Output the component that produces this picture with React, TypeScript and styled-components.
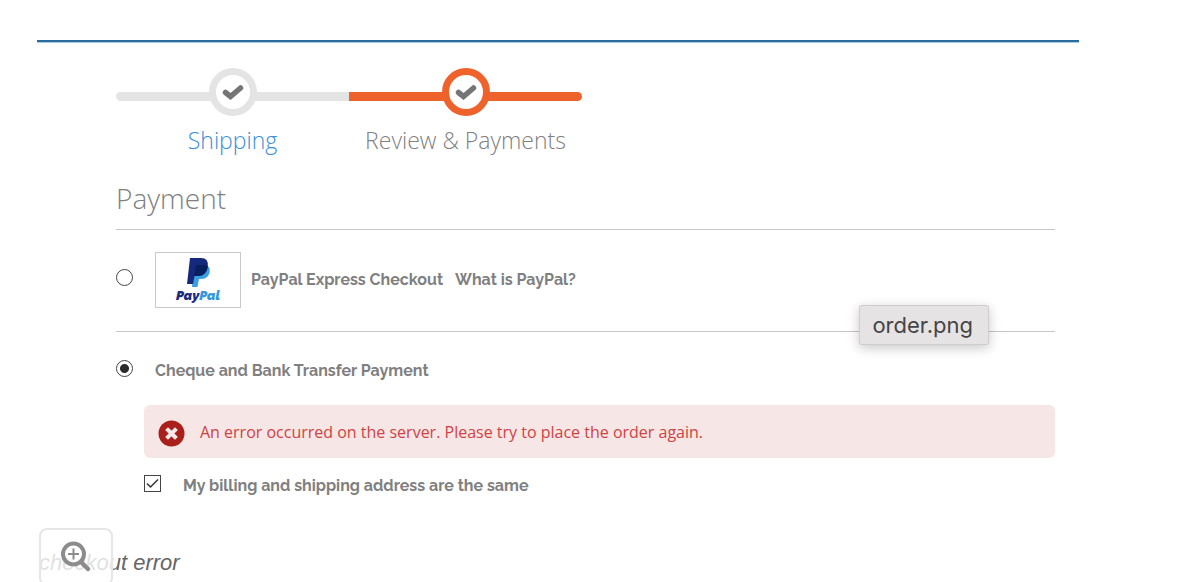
import React from 'react';
import styled, { createGlobalStyle } from 'styled-components';

const GlobalStyle = createGlobalStyle`
  *, *::before, *::after { box-sizing: border-box; }
  body { margin: 0; background: #fff; }
  h2, ol, figure { margin: 0; padding: 0; }
`;

const Figure = styled.figure`
  min-width: 0;
  height: 100vh;
  overflow: hidden;
  padding: 40px 103px 0 37px;
`;

const Screen = styled.div`
  border-top: 2px solid #2b6c9c;
  box-shadow: inset 0 1px 0 #a9cfe2;
  padding: 26px 24px 0 79px;
  font-family: 'Open Sans', 'Noto Sans', sans-serif;
  color: #808080;
`;

const Steps = styled.ol`
  display: flex;
  max-width: 466px;
  list-style: none;
`;

const Step = styled.li<{ $color: string; $last?: boolean }>`
  flex: 1;
  display: grid;
  grid-template-rows: 48px auto;
  justify-items: center;

  &::before {
    content: '';
    grid-area: 1 / 1;
    align-self: end;
    justify-self: stretch;
    height: 9px;
    margin-bottom: 15px;
    background: ${p => p.$color};
    border-radius: ${p => (p.$last ? '0 5px 5px 0' : '5px 0 0 5px')};
  }
`;

const Ring = styled.span<{ $color: string }>`
  grid-area: 1 / 1;
  z-index: 1;
  display: grid;
  place-items: center;
  width: 48px;
  height: 48px;
  border: 7px solid ${p => p.$color};
  border-radius: 50%;
  background: #fff;
`;

const StepLabel = styled.span`
  margin-top: 8px;
  font-size: 23px;
  font-weight: 300;
  line-height: 32px;
  white-space: nowrap;
`;

const StepLink = styled.a`
  color: #3a8fd6;
  text-decoration: none;
`;

const Title = styled.h2`
  margin-top: 24px;
  padding-bottom: 12px;
  border-bottom: 1px solid #c6c6c6;
  font-size: 28px;
  font-weight: 300;
  line-height: 37px;
`;

const Method = styled.div`
  position: relative;
  display: flex;
  align-items: center;
  height: 102px;
  padding-bottom: 1px;
  border-bottom: 1px solid #c6c6c6;
`;

const PlainMethod = styled.div`
  display: flex;
  align-items: center;
  height: 73px;
  padding-top: 4px;
`;

const Radio = styled.input`
  appearance: none;
  flex: none;
  width: 17px;
  height: 17px;
  margin: 0 22px 5px 0;
  border: 1px solid #444;
  border-radius: 50%;
  background: #fff;

  &:checked {
    background: radial-gradient(circle, #2b2b2b 4px, #fff 5px);
  }
`;

const OptionLabel = styled.label`
  display: flex;
  align-items: center;
  gap: 10px;
  font-family: Raleway, Lato, sans-serif;
  font-size: 16px;
  font-weight: 700;
  line-height: 24px;
`;

const HelpLink = styled.a`
  margin-left: 12px;
  font-family: Raleway, Lato, sans-serif;
  font-size: 16px;
  font-weight: 700;
  line-height: 24px;
  color: inherit;
  text-decoration: none;
`;

const Logo = styled.span`
  display: flex;
  flex-direction: column;
  align-items: center;
  width: 86px;
  height: 56px;
  padding-top: 4px;
  border: 1px solid #c9c9c9;
`;

const LogoName = styled.span`
  font-family: Raleway, Lato, sans-serif;
  font-size: 13px;
  font-weight: 900;
  font-style: italic;
  line-height: 16px;
  color: #1b2a7c;

  b { font-weight: 900; color: #3497dc; }
`;

const Tooltip = styled.span`
  position: absolute;
  right: 66px;
  bottom: -14px;
  padding: 0 15px 0 12px;
  border: 1px solid #cfcdce;
  border-radius: 2px;
  background: #e6e3e4;
  box-shadow: 0 3px 12px rgba(0, 0, 0, 0.22);
  font-family: Inter, sans-serif;
  font-size: 22px;
  line-height: 38px;
  color: #454545;
`;

const Details = styled.div`
  padding-left: 28px;
`;

const Alert = styled.div`
  display: flex;
  align-items: center;
  gap: 15px;
  min-height: 53px;
  padding: 0 14px;
  border-radius: 6px;
  background: #f6e6e5;
  font-size: 16px;
  line-height: 24px;
  color: #cf4344;
`;

const AlertIcon = styled.svg`
  flex: none;
  margin-top: 4px;
`;

const AddressRow = styled.div`
  display: flex;
  align-items: center;
  margin-top: 16px;
`;

const CheckBox = styled.span`
  display: grid;
  width: 17px;
  height: 17px;
  margin: 0 22px 6px 0;

  input, svg { grid-area: 1 / 1; }
  svg { pointer-events: none; visibility: hidden; }
  input:checked + svg { visibility: visible; }
`;

const CheckInput = styled.input`
  appearance: none;
  width: 17px;
  height: 17px;
  margin: 0;
  border: 1px solid #444;
  background: #fff;
`;

const Caption = styled.figcaption`
  position: relative;
  margin-top: 52px;
  padding-left: 2px;
  font-family: 'Liberation Sans', Arial, sans-serif;
  font-size: 22px;
  font-style: italic;
  line-height: 26px;
  color: #666;
`;

const ZoomButton = styled.button`
  position: absolute;
  left: 2px;
  top: -22px;
  display: flex;
  align-items: flex-start;
  width: 74px;
  height: 58px;
  padding: 10px 0 0 19px;
  border: 2px solid #e6e6e6;
  border-radius: 8px;
  background: rgba(255, 255, 255, 0.8);
`;

const Tick = () => (
  <svg width="22" height="16" viewBox="0 0 22 16" aria-hidden="true">
    <path d="M3.500 8.500 L8.500 12.500 L18.500 4" fill="none" stroke="#757575" strokeWidth="5.500" strokeLinecap="round" strokeLinejoin="miter" />
  </svg>
);

export default function App() {
  return (
    <>
      <GlobalStyle />
      <Figure>
        <Screen>
          <Steps>
            <Step $color="#e4e4e4">
              <Ring $color="#e4e4e4"><Tick /></Ring>
              <StepLabel><StepLink href="#shipping">Shipping</StepLink></StepLabel>
            </Step>
            <Step $color="#ee622c" $last>
              <Ring $color="#ee622c"><Tick /></Ring>
              <StepLabel>Review &amp; Payments</StepLabel>
            </Step>
          </Steps>

          <Title>Payment</Title>

          <Method>
            <Radio type="radio" name="method" id="paypal" />
            <OptionLabel htmlFor="paypal">
              <Logo>
                <svg width="26" height="31" viewBox="0 0 26 31" aria-hidden="true">
                  <path d="M9 8 H21 Q26 10 24.500 16 Q22.500 22 16 22 H14 L12.500 30 H7 Z" fill="#3b9ee0" />
                  <path d="M5 1 H16 Q24 1 22.800 10 Q21 19 12.500 19 H9.500 L8 27 H2 Z" fill="#15297c" />
                  <path d="M11 8 H20 Q22.500 8 22.800 10 Q21 19 12.500 19 H9.300 Z" fill="#071f5c" />
                </svg>
                <LogoName>Pay<b>Pal</b></LogoName>
              </Logo>
              PayPal Express Checkout
            </OptionLabel>
            <HelpLink href="#what-is-paypal">What is PayPal?</HelpLink>
            <Tooltip role="tooltip">order.png</Tooltip>
          </Method>

          <PlainMethod>
            <Radio type="radio" name="method" id="cheque" defaultChecked />
            <OptionLabel htmlFor="cheque">Cheque and Bank Transfer Payment</OptionLabel>
          </PlainMethod>

          <Details>
            <Alert role="alert">
              <AlertIcon width="27" height="27" viewBox="0 0 27 27" aria-hidden="true">
                <circle cx="13.500" cy="13.500" r="13" fill="#a91f1b" />
                <path d="M10 10 L17 17 M17 10 L10 17" stroke="#f9e9e8" strokeWidth="4" strokeLinecap="square" />
              </AlertIcon>
              An error occurred on the server. Please try to place the order again.
            </Alert>
            <AddressRow>
              <CheckBox>
                <CheckInput type="checkbox" id="same-address" defaultChecked />
                <svg width="17" height="17" viewBox="0 0 17 17" aria-hidden="true">
                  <path d="M3 8.500 L6.500 12 L14 4.500" fill="none" stroke="#333" strokeWidth="1.500" />
                </svg>
              </CheckBox>
              <OptionLabel htmlFor="same-address">My billing and shipping address are the same</OptionLabel>
            </AddressRow>
          </Details>
        </Screen>

        <Caption>
          checkout error
          <ZoomButton type="button" aria-label="Zoom in">
            <svg width="32" height="32" viewBox="0 0 32 32" aria-hidden="true">
              <circle cx="13.500" cy="14" r="10.500" fill="#fff" fillOpacity="0.7" stroke="#8c8c8c" strokeWidth="4" />
              <path d="M13.500 8.500 V19.500 M8 14 H19" stroke="#8c8c8c" strokeWidth="2" />
              <path d="M22 23 L28 29" stroke="#8c8c8c" strokeWidth="4.500" strokeLinecap="round" />
            </svg>
          </ZoomButton>
        </Caption>
      </Figure>
    </>
  );
}
